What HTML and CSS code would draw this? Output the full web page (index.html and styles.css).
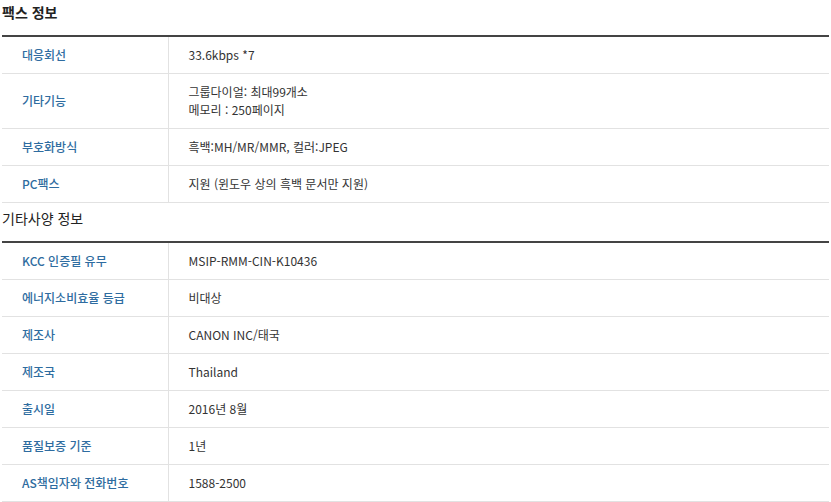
FILE: index.html
```html
<!DOCTYPE html>
<html lang="ko">
<head>
    <meta charset="UTF-8">
    <title>제품 사양</title>
    <link rel="stylesheet" href="styles.css">
</head>
<body>
    <div class="spec">
        <h3 class="spec-title spec-title--first">팩스 정보</h3>
        <table class="spec-table">
            <tr><th>대응회선</th><td>33.6kbps *7</td></tr>
            <tr><th>기타기능</th><td>그룹다이얼: 최대99개소<br>메모리 : 250페이지</td></tr>
            <tr><th>부호화방식</th><td>흑백:MH/MR/MMR, 컬러:JPEG</td></tr>
            <tr><th>PC팩스</th><td>지원 (윈도우 상의 흑백 문서만 지원)</td></tr>
        </table>

        <h3 class="spec-title">기타사양 정보</h3>
        <table class="spec-table">
            <tr><th>KCC 인증필 유무</th><td>MSIP-RMM-CIN-K10436</td></tr>
            <tr><th>에너지소비효율 등급</th><td>비대상</td></tr>
            <tr><th>제조사</th><td>CANON INC/태국</td></tr>
            <tr><th>제조국</th><td>Thailand</td></tr>
            <tr><th>출시일</th><td>2016년 8월</td></tr>
            <tr><th>품질보증 기준</th><td>1년</td></tr>
            <tr><th>AS책임자와 전화번호</th><td>1588-2500</td></tr>
        </table>
    </div>
</body>
</html>
```

FILE: styles.css
```css
* {
    margin: 0;
    padding: 0;
    box-sizing: border-box;
}

body {
    font-family: "Noto Sans CJK KR", "Noto Sans", sans-serif;
    font-size: 12px;
    color: #333;
    background: #fff;
}

.spec {
    width: 829px;
    padding-left: 2px;
}

.spec-title {
    font-size: 14px;
    font-weight: normal;
    color: #222;
    line-height: 24px;
    margin: 3px 0 11px;
}

.spec-title--first {
    margin-top: 0;
    font-weight: bold;
}

.spec-table {
    width: 100%;
    border-collapse: collapse;
    border-top: 2px solid #444;
}

.spec-table th,
.spec-table td {
    text-align: left;
    vertical-align: middle;
    line-height: 18px;
    padding: 9px 0 9px 20px;
    border-bottom: 1px solid #e2e2e2;
}

.spec-table th {
    width: 166px;
    font-weight: 500;
    color: #2e6ca0;
    border-right: 1px solid #e2e2e2;
}
```
